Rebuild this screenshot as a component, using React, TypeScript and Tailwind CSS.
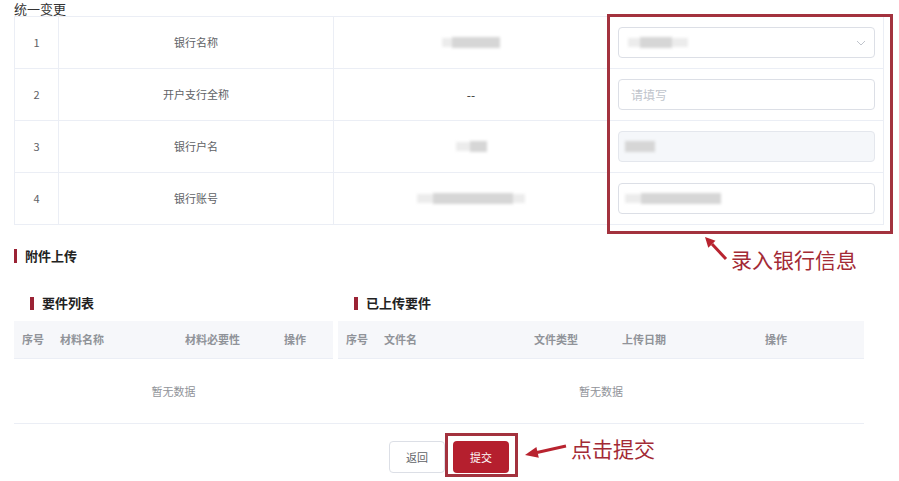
const rows = [
  { no: "1", label: "银行名称", kind: "select" },
  { no: "2", label: "开户支行全称", kind: "input" },
  { no: "3", label: "银行户名", kind: "disabled" },
  { no: "4", label: "银行账号", kind: "account" },
];

function Smudge({ light, dark, lightAfter = 0 }: { light: number; dark: number; lightAfter?: number }) {
  // blurred placeholder for masked values
  return (
    <span className="inline-flex h-[11px] items-center blur-[1.5px]">
      <span className="h-[9px] bg-[#ececec]" style={{ width: light }} />
      <span className="h-[11px] bg-[#d6d6d6]" style={{ width: dark }} />
      <span className="h-[9px] bg-[#ececec]" style={{ width: lightAfter }} />
    </span>
  );
}

function ValueCell({ no }: { no: string }) {
  if (no === "1") return <Smudge light={10} dark={48} />;
  if (no === "2") return <span className="text-[12px] text-[#333]">--</span>;
  if (no === "3") return <Smudge light={14} dark={17} />;
  return <Smudge light={16} dark={80} lightAfter={12} />;
}

function EditCell({ kind }: { kind: string }) {
  if (kind === "select") {
    return (
      <div className="flex h-[31px] items-center justify-between rounded-[4px] border border-[#dcdfe6] bg-white pl-[9px] pr-[8px]">
        <Smudge light={12} dark={32} lightAfter={16} />
        <svg width="10" height="6" viewBox="0 0 10 6" fill="none" stroke="#c0c4cc" strokeWidth="1">
          <path d="M1 1l4 4 4-4" />
        </svg>
      </div>
    );
  }
  if (kind === "input") {
    return (
      <div className="flex h-[31px] items-center rounded-[4px] border border-[#dcdfe6] bg-white pl-[12px] text-[12px] text-[#c0c4cc]">
        请填写
      </div>
    );
  }
  if (kind === "disabled") {
    return (
      <div className="flex h-[31px] items-center rounded-[4px] border border-[#e4e7ed] bg-[#f5f7fa] pl-[6px]">
        <Smudge light={0} dark={30} />
      </div>
    );
  }
  return (
    <div className="flex h-[31px] items-center rounded-[4px] border border-[#dcdfe6] bg-white pl-[6px]">
      <Smudge light={16} dark={80} />
    </div>
  );
}

function SubTitle({ text }: { text: string }) {
  return (
    <div className="flex h-[14px] items-center gap-[8px] pl-[16px]">
      <span className="h-[13px] w-[4px] bg-[#9b2335]" />
      <span className="text-[13px] font-bold text-[#222]">{text}</span>
    </div>
  );
}

export default function App() {
  return (
    <div className="relative h-[481px] w-[899px] overflow-hidden bg-white font-['Noto_Sans_CJK_SC','Noto_Sans',sans-serif]">
      <div className="pl-[14px] pr-[16px]">
        <div className="flex h-[16px] items-center text-[13px] leading-[15px] text-[#333]">统一变更</div>

        <table className="w-[869px] table-fixed border-collapse text-[11px] text-[#606266]">
          <colgroup>
            <col className="w-[44px]" />
            <col className="w-[275px]" />
            <col className="w-[275px]" />
            <col className="w-[275px]" />
          </colgroup>
          <tbody>
            {rows.map((r) => (
              <tr key={r.no} className="h-[52px]">
                <td className="border border-[#ebeef5] text-center">{r.no}</td>
                <td className="border border-[#ebeef5] text-center">{r.label}</td>
                <td className="border border-[#ebeef5] text-center">
                  <ValueCell no={r.no} />
                </td>
                <td className="border border-[#ebeef5] pl-[9px] pr-[8px]">
                  <EditCell kind={r.kind} />
                </td>
              </tr>
            ))}
          </tbody>
        </table>

        <div className="mt-[24px] flex h-[14px] items-center gap-[8px]">
          <span className="h-[14px] w-[3px] bg-[#9b2335]" />
          <span className="text-[13px] font-bold text-[#222]">附件上传</span>
        </div>

        <div className="mt-[33px] flex w-[850px] gap-[5px] border-b border-[#ebeef5]">
          <div className="w-[319px]">
            <SubTitle text="要件列表" />
            <div className="mt-[11px] flex h-[38px] items-center border-b border-[#ebeef5] bg-[#f6f7fa] text-[11px] font-bold text-[#909399]">
              <span className="w-[46px] pl-[8px]">序号</span>
              <span className="w-[125px]">材料名称</span>
              <span className="w-[99px]">材料必要性</span>
              <span>操作</span>
            </div>
            <div className="flex h-[64px] items-center justify-center text-[11px] text-[#909399]">暂无数据</div>
          </div>
          <div className="w-[526px]">
            <SubTitle text="已上传要件" />
            <div className="mt-[11px] flex h-[38px] items-center border-b border-[#ebeef5] bg-[#f6f7fa] text-[11px] font-bold text-[#909399]">
              <span className="w-[46px] pl-[8px]">序号</span>
              <span className="w-[150px]">文件名</span>
              <span className="w-[88px]">文件类型</span>
              <span className="w-[143px]">上传日期</span>
              <span>操作</span>
            </div>
            <div className="flex h-[64px] items-center justify-center text-[11px] text-[#909399]">暂无数据</div>
          </div>
        </div>

        <div className="mt-[17px] flex w-[870px] justify-center gap-[8px]">
          <button className="h-[32px] w-[56px] rounded-[4px] border border-[#dcdfe6] bg-white text-[11px] text-[#606266]">返回</button>
          <button className="h-[32px] w-[56px] rounded-[4px] bg-[#b51f2e] text-[11px] text-white">提交</button>
        </div>
      </div>

      {/* annotations drawn over the screenshot */}
      <div className="pointer-events-none absolute left-[607px] top-[14px] h-[220px] w-[286px] border-[3px] border-[#a3323e]" />
      <div className="pointer-events-none absolute left-[445px] top-[433px] h-[44px] w-[73px] border-[3px] border-[#a3323e]" />
      <svg className="pointer-events-none absolute inset-0" width="899" height="481">
        <line x1="712" y1="244" x2="726" y2="259" stroke="#b8232f" strokeWidth="3" />
        <polygon points="705,237 708.3,247.7 715.5,240.8" fill="#b8232f" />
        <line x1="537" y1="452.5" x2="566" y2="446" stroke="#b8232f" strokeWidth="3" />
        <polygon points="525,455 538.8,457.8 536.4,447" fill="#b8232f" />
      </svg>
      <div className="pointer-events-none absolute left-[731px] top-[246px] text-[21px] leading-[26px] text-[#a32a35]">录入银行信息</div>
      <div className="pointer-events-none absolute left-[571px] top-[435px] text-[21px] leading-[26px] text-[#a32a35]">点击提交</div>
    </div>
  );
}
